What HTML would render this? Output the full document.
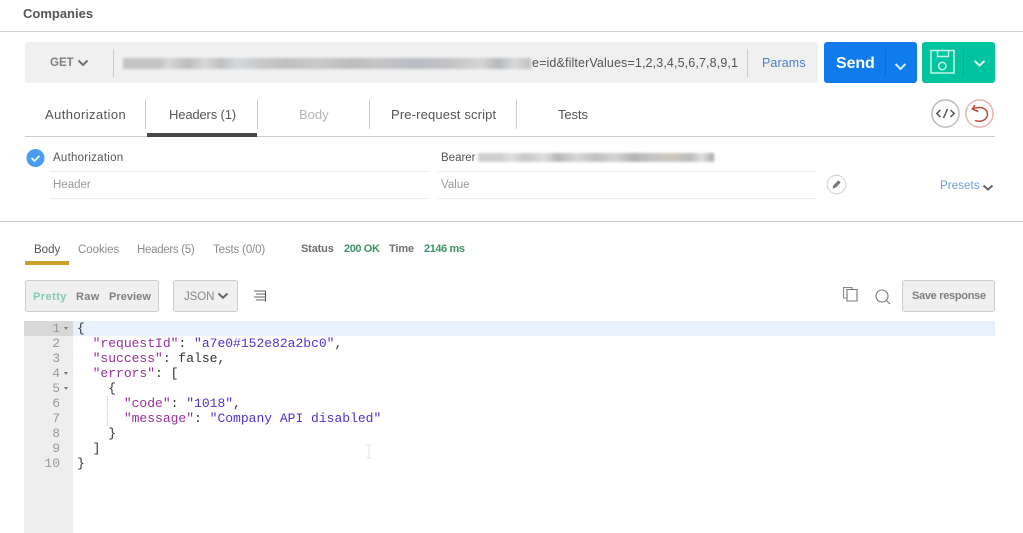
<!DOCTYPE html>
<html><head><meta charset="utf-8"><style>
html,body{margin:0;padding:0;background:#fff;width:1023px;height:533px;overflow:hidden}
body{font-family:"Liberation Sans",sans-serif;font-size:12px;color:#505050;position:relative}
.a{position:absolute;white-space:nowrap;line-height:16px}
.b{position:absolute}
.m{font-family:"Liberation Mono",monospace;font-size:13px;line-height:15px;position:absolute;white-space:pre;color:#333}
.n{font-family:"Liberation Mono",monospace;font-size:13px;line-height:15px;position:absolute;color:#999;width:36px;text-align:right;left:24px}
.k{color:#96309a}.s{color:#4a35d0}
.blur{position:absolute;filter:blur(1.2px);background-size:100% 100%}
.tri{position:absolute;width:0;height:0;border-left:2.5px solid transparent;border-right:2.5px solid transparent;border-top:3px solid #777;left:64px}
</style></head><body>
<div class="a" style="left:23px;top:6px;font-size:13px;font-weight:bold;color:#555;letter-spacing:0">Companies</div>
<div class="b" style="left:0;top:31px;width:1023px;height:1px;background:#d0d0d0"></div>

<div class="b" style="left:25px;top:42px;width:793px;height:41px;background:#f0f0f0;border-radius:3px"></div>
<div class="a" style="left:50px;top:55px;font-size:11.5px;font-weight:bold;color:#808080">GET</div>
<svg class="b" style="left:77px;top:59px" width="12" height="8"><path d="M1.5 1.5L6 6L10.500 1.500" fill="none" stroke="#707070" stroke-width="2"/></svg>
<div class="b" style="left:113px;top:49px;width:1px;height:28px;background:#ccc"></div>
<div class="blur" style="left:123px;top:58px;width:408px;height:11px;background:linear-gradient(90deg,#c4c4c4 0 9%,#d8d8d8 11%,#c6c6c6 14%,#bdbdbd 16%,#d6d8d8 20%,#c0c0c0 24%,#d4d8dc 28%,#c8c8c8 34%,#c0c0c0 40%,#cacaca 48%,#bcbcbc 56%,#c6c6c6 62%,#b8bcc4 72%,#c4c4c4 80%,#d4d4d4 88%,#b4b8bc 92%,#d8d8d8 96%,#c0c0c0 100%)"></div>
<div class="a" style="left:532px;top:55px;font-size:12.5px;color:#555;width:206px;overflow:hidden;letter-spacing:.13px">e=id&amp;filterValues=1,2,3,4,5,6,7,8,9,1</div>
<div class="b" style="left:747px;top:49px;width:1px;height:28px;background:#ccc"></div>
<div class="a" style="left:762px;top:55px;font-size:12.5px;color:#4a80c4;letter-spacing:.1px">Params</div>

<div class="b" style="left:824px;top:42px;width:93px;height:41px;background:#0f7bec;border-radius:3px"></div>
<div class="a" style="left:836px;top:56px;font-size:16px;font-weight:bold;color:#fff;letter-spacing:-.1px">Send</div>
<div class="b" style="left:885px;top:49px;width:1px;height:28px;background:#0c6ad0"></div>
<svg class="b" style="left:894px;top:62px" width="13" height="9"><path d="M1.500 2L6.500 7L11.500 2" fill="none" stroke="#dcebfb" stroke-width="2"/></svg>

<div class="b" style="left:922px;top:42px;width:73px;height:41px;background:#00c4a0;border-radius:3px"></div>
<svg class="b" style="left:929px;top:49px" width="27" height="26"><path d="M2 1.500H25V24H2Z M8.500 1.500V7.500H19.500V1.500" fill="none" stroke="#c6f3e8" stroke-width="1.500"/><circle cx="13.300" cy="17" r="3.700" fill="none" stroke="#c6f3e8" stroke-width="1.500"/></svg>
<div class="b" style="left:963px;top:49px;width:1px;height:28px;background:#00ad8d"></div>
<svg class="b" style="left:973px;top:59px" width="13" height="9"><path d="M1.500 1.800L6.500 6.500L11.500 1.800" fill="none" stroke="#e4faf4" stroke-width="2"/></svg>

<div class="a" style="left:45px;top:107px;font-size:13px;color:#555;letter-spacing:.4px">Authorization</div>
<div class="a" style="left:169px;top:107px;font-size:13px;color:#555;letter-spacing:-.15px">Headers (1)</div>
<div class="a" style="left:299px;top:107px;font-size:13px;color:#b4b4b4;letter-spacing:0">Body</div>
<div class="a" style="left:391px;top:107px;font-size:13px;color:#555;letter-spacing:.15px">Pre-request script</div>
<div class="a" style="left:558px;top:107px;font-size:13px;color:#555;letter-spacing:-.1px">Tests</div>
<div class="b" style="left:145px;top:99px;width:1px;height:30px;background:#ccc"></div>
<div class="b" style="left:257px;top:99px;width:1px;height:30px;background:#ccc"></div>
<div class="b" style="left:369px;top:99px;width:1px;height:30px;background:#ccc"></div>
<div class="b" style="left:516px;top:99px;width:1px;height:30px;background:#ccc"></div>
<div class="b" style="left:25px;top:136px;width:970px;height:1px;background:#ccc"></div>
<div class="b" style="left:147px;top:133px;width:110px;height:4px;background:#484848"></div>

<svg class="b" style="left:931px;top:99px" width="30" height="30"><circle cx="14.500" cy="14.500" r="13.600" fill="#fff" stroke="#bdbdbd" stroke-width="1.500"/><path d="M9.500 11L5.800 14.500L9.500 18M19.500 11L23.200 14.500L19.500 18M16.500 10L12.500 19" fill="none" stroke="#555" stroke-width="1.500"/></svg>
<svg class="b" style="left:965px;top:99px" width="30" height="30"><circle cx="14.500" cy="14.500" r="13.600" fill="#fff" stroke="#e8b4b0" stroke-width="1.500"/><path d="M10 6L7.300 10L13.300 12.500M7.600 9.800C9.500 8.800 12 8.500 14.500 8.500C19 8.500 22.500 11.500 22.500 15C22.500 19.500 18.500 22.300 14.500 22.300C12.500 22.300 11 22 10 21.500" fill="none" stroke="#c0453a" stroke-width="1.500"/></svg>

<svg class="b" style="left:26px;top:149px" width="19" height="19"><circle cx="9.500" cy="9" r="9" fill="#4a9cf0"/><path d="M5.500 9L8.500 12L13.500 6.800" fill="none" stroke="#fff" stroke-width="1.600"/></svg>
<div class="a" style="left:53px;top:150px;font-size:11.500px;color:#555;letter-spacing:.25px">Authorization</div>
<div class="a" style="left:441px;top:150px;font-size:11.500px;color:#555;letter-spacing:0">Bearer</div>
<div class="blur" style="left:478px;top:153px;width:236px;height:9px;background:linear-gradient(90deg,#d0d0d0 0 10%,#e0e0e0 14%,#c8c8c8 20%,#dddddd 28%,#b8b8b8 34%,#d8d8d8 42%,#c0c0c0 50%,#d4d4d4 58%,#b4b4b4 66%,#c4c4c4 74%,#d0c8c0 82%,#bcbcbc 90%,#e0e0e0 95%,#a8a8a8 100%)"></div>
<div class="b" style="left:50px;top:171px;width:378px;height:1px;background:#eee"></div>
<div class="b" style="left:438px;top:171px;width:378px;height:1px;background:#eee"></div>
<div class="a" style="left:53px;top:177px;font-size:11.500px;color:#9a9a9a">Header</div>
<div class="a" style="left:441px;top:177px;font-size:11.500px;color:#9a9a9a">Value</div>
<div class="b" style="left:50px;top:198px;width:378px;height:1px;background:#eee"></div>
<div class="b" style="left:438px;top:198px;width:378px;height:1px;background:#eee"></div>
<svg class="b" style="left:826px;top:174px" width="22" height="22"><circle cx="10.500" cy="10.500" r="9.300" fill="#fff" stroke="#d0d0d0"/><path d="M6.500 14.500L7.300 11.500L12.500 6.300L14.700 8.500L9.500 13.700Z" fill="#777"/></svg>
<div class="a" style="left:940px;top:178px;font-size:11.500px;color:#6c9bdc;letter-spacing:.1px">Presets</div>
<svg class="b" style="left:982px;top:184px" width="12" height="8"><path d="M1.500 1.500L6 5.500L10.500 1.500" fill="none" stroke="#666" stroke-width="2"/></svg>
<div class="b" style="left:0;top:221px;width:1023px;height:1px;background:#ccc"></div>

<div class="a" style="left:34px;top:242px;font-size:11.500px;color:#555;letter-spacing:0">Body</div>
<div class="a" style="left:78px;top:242px;font-size:11.500px;color:#8c8c8c;letter-spacing:-.05px">Cookies</div>
<div class="a" style="left:137px;top:242px;font-size:11.500px;color:#8c8c8c;letter-spacing:-.3px">Headers (5)</div>
<div class="a" style="left:213px;top:242px;font-size:11.500px;color:#8c8c8c;letter-spacing:-.15px">Tests (0/0)</div>
<div class="b" style="left:25px;top:261px;width:44px;height:4px;background:#c9a02c"></div>
<div class="a" style="left:301px;top:241px;font-size:11px;font-weight:bold;color:#707070;letter-spacing:-.15px">Status</div>
<div class="a" style="left:344px;top:241px;font-size:11px;font-weight:bold;color:#3f9268;letter-spacing:-.4px">200 OK</div>
<div class="a" style="left:389px;top:241px;font-size:11px;font-weight:bold;color:#707070;letter-spacing:-.1px">Time</div>
<div class="a" style="left:424px;top:241px;font-size:11px;font-weight:bold;color:#3f9268;letter-spacing:-.4px">2146 ms</div>

<div class="b" style="left:25px;top:280px;width:132px;height:30px;background:#f0f0f0;border:1px solid #ccc;border-radius:3px"></div>
<div class="a" style="left:33px;top:289px;font-size:11px;font-weight:bold;color:#7fcdb0;letter-spacing:.45px">Pretty</div>
<div class="a" style="left:76px;top:289px;font-size:11px;font-weight:bold;color:#808080;letter-spacing:.35px">Raw</div>
<div class="a" style="left:109px;top:289px;font-size:11px;font-weight:bold;color:#808080;letter-spacing:.05px">Preview</div>
<div class="b" style="left:173px;top:280px;width:63px;height:30px;background:#f0f0f0;border:1px solid #ccc;border-radius:3px"></div>
<div class="a" style="left:184px;top:289px;font-size:11.500px;color:#888;letter-spacing:-.1px">JSON</div>
<svg class="b" style="left:217px;top:292px" width="12" height="8"><path d="M1.500 1.500L6 5.700L10.500 1.500" fill="none" stroke="#666" stroke-width="2"/></svg>
<svg class="b" style="left:253px;top:290px" width="14" height="13"><path d="M1 1H12M3 4H12M1 7H12M3 10H12" stroke="#666" stroke-width="1" fill="none"/><path d="M12.500 0.500V11.500" stroke="#555" stroke-width="1"/></svg>

<svg class="b" style="left:842px;top:285px" width="18" height="19"><path d="M4.500 13H1.500V2.500H10V4.500" fill="none" stroke="#888" stroke-width="1.100"/><path d="M5 4.500H15V16H5Z" fill="#fff" stroke="#777" stroke-width="1.100"/></svg>
<svg class="b" style="left:875px;top:288px" width="17" height="17"><circle cx="7" cy="8" r="6" fill="none" stroke="#777" stroke-width="1.100"/><path d="M11.500 12.500L15 16" stroke="#777" stroke-width="1.100"/></svg>
<div class="b" style="left:902px;top:280px;width:91px;height:30px;background:#f0f0f0;border:1px solid #ccc;border-radius:3px"></div>
<div class="a" style="left:912px;top:288px;font-size:11px;font-weight:bold;color:#808080;letter-spacing:-.3px">Save response</div>

<div class="b" style="left:24px;top:321px;width:49px;height:212px;background:#eeeeee"></div>
<div class="b" style="left:24px;top:321px;width:49px;height:15px;background:#d8d8d8"></div>
<div class="b" style="left:73px;top:321px;width:922px;height:15px;background:#e8f2fc"></div>
<div class="n" style="top:321px">1</div><div class="n" style="top:336px">2</div><div class="n" style="top:351px">3</div><div class="n" style="top:366px">4</div><div class="n" style="top:381px">5</div><div class="n" style="top:396px">6</div><div class="n" style="top:411px">7</div><div class="n" style="top:426px">8</div><div class="n" style="top:441px">9</div><div class="n" style="top:456px">10</div>
<div class="tri" style="top:327px"></div><div class="tri" style="top:372px"></div><div class="tri" style="top:387px"></div>
<div class="b" style="left:107px;top:396px;width:0;height:30px;border-left:1px dotted #ccc"></div>
<div class="m" style="left:77px;top:321px">{</div>
<div class="m" style="left:77px;top:336px">  <span class="k">"requestId"</span>: <span class="s">"a7e0#152e82a2bc0"</span>,</div>
<div class="m" style="left:77px;top:351px">  <span class="k">"success"</span>: false,</div>
<div class="m" style="left:77px;top:366px">  <span class="k">"errors"</span>: [</div>
<div class="m" style="left:77px;top:381px">    {</div>
<div class="m" style="left:77px;top:396px">      <span class="k">"code"</span>: <span class="s">"1018"</span>,</div>
<div class="m" style="left:77px;top:411px">      <span class="k">"message"</span>: <span class="s">"Company API disabled"</span></div>
<div class="m" style="left:77px;top:426px">    }</div>
<div class="m" style="left:77px;top:441px">  ]</div>
<div class="m" style="left:77px;top:456px">}</div>
<svg class="b" style="left:365px;top:444px" width="8" height="16"><path d="M1 1H7M1 14H7M4 1V14" stroke="#e4e4e4" stroke-width="1" fill="none"/></svg>
</body></html>
